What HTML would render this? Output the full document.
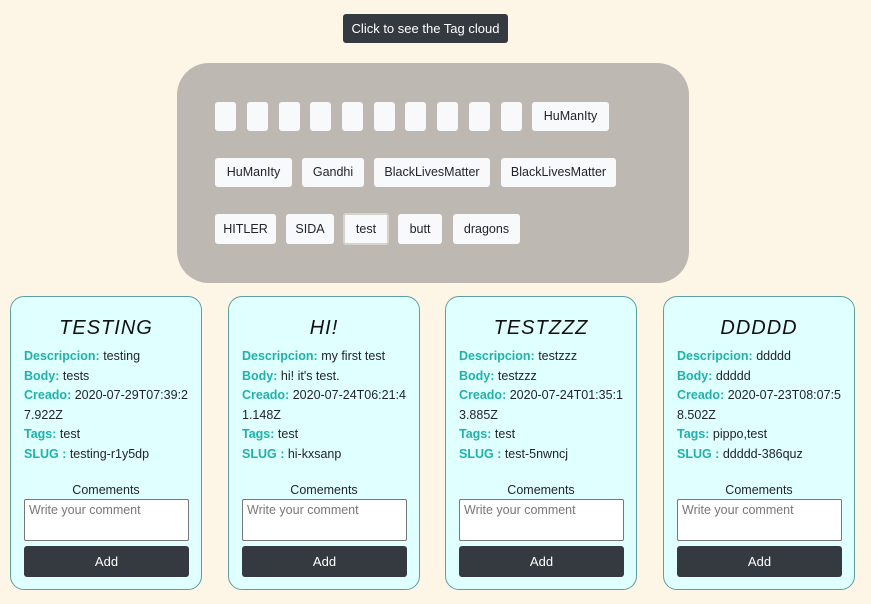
<!DOCTYPE html>
<html><head><style>
*{box-sizing:border-box;margin:0;padding:0}
body{width:871px;height:604px;background:#fdf5e6;font-family:"Liberation Sans",sans-serif;position:relative;overflow:hidden;color:#212529}
.top{position:absolute;left:343px;top:14px;width:165px;height:29px;background:#343a40;color:#fff;border-radius:3px;font-size:13px;text-align:center;line-height:29px}
.panel{position:absolute;left:177px;top:63px;width:512px;height:220px;background:#bdb8b2;border-radius:32px}
.t{position:absolute;background:#f8f9fa;border-radius:3px;font-size:12.5px;color:#212529;text-align:center;line-height:29px;height:29px}
.card{position:absolute;top:296px;width:192px;height:294px;background:#e0ffff;border:1px solid #5f9ea0;border-radius:14px}
.card h2{position:absolute;top:20px;left:0;right:0;text-align:center;font-style:italic;font-weight:normal;font-size:20px;letter-spacing:1px;color:#111}
.info{position:absolute;left:13px;top:50px;width:170px;font-size:12.5px;line-height:19.5px;word-break:break-all}
.info b{color:#20b2aa}
.cm{position:absolute;top:186px;left:0;right:0;text-align:center;font-size:12.5px}
.ta{position:absolute;left:13px;top:202px;width:165px;height:42px;background:#fff;border:1px solid #767676;border-radius:2px;font-size:12.5px;color:#777;padding:3px 4px}
.add{position:absolute;left:13px;top:249px;width:165px;height:31px;background:#343a40;color:#fff;border-radius:3px;text-align:center;line-height:31px;font-size:13px}
</style></head><body>
<div class="top">Click to see the Tag cloud</div>
<div class="panel"></div>
<div class="t" style="left:215px;top:102px;width:21px"></div>
<div class="t" style="left:247px;top:102px;width:21px"></div>
<div class="t" style="left:279px;top:102px;width:21px"></div>
<div class="t" style="left:310px;top:102px;width:21px"></div>
<div class="t" style="left:342px;top:102px;width:21px"></div>
<div class="t" style="left:374px;top:102px;width:21px"></div>
<div class="t" style="left:405px;top:102px;width:21px"></div>
<div class="t" style="left:437px;top:102px;width:21px"></div>
<div class="t" style="left:469px;top:102px;width:21px"></div>
<div class="t" style="left:501px;top:102px;width:21px"></div>
<div class="t" style="left:532px;top:102px;width:77px">HuManIty</div>
<div class="t" style="left:215px;top:158px;width:77px">HuManIty</div>
<div class="t" style="left:302px;top:158px;width:62px">Gandhi</div>
<div class="t" style="left:374px;top:158px;width:116px">BlackLivesMatter</div>
<div class="t" style="left:501px;top:158px;width:115px">BlackLivesMatter</div>
<div class="t" style="left:215px;top:214px;width:61px;height:30px;line-height:30px">HITLER</div>
<div class="t" style="left:286px;top:214px;width:48px;height:30px;line-height:30px">SIDA</div>
<div class="t" style="left:343px;top:213px;width:46px;height:32px;line-height:28px;border:2px solid #d6d3cf">test</div>
<div class="t" style="left:398px;top:214px;width:44px;height:30px;line-height:30px">butt</div>
<div class="t" style="left:453px;top:214px;width:67px;height:30px;line-height:30px">dragons</div>

<div class="card" style="left:10px"><h2>TESTING</h2><div class="info"><b>Descripcion:</b> testing<br><b>Body:</b> tests<br><b>Creado:</b> 2020-07-29T07:39:27.922Z<br><b>Tags:</b> test<br><b>SLUG :</b> testing-r1y5dp</div><div class="cm">Comements</div><div class="ta">Write your comment</div><div class="add">Add</div></div>
<div class="card" style="left:228px"><h2>HI!</h2><div class="info"><b>Descripcion:</b> my first test<br><b>Body:</b> hi! it's test.<br><b>Creado:</b> 2020-07-24T06:21:41.148Z<br><b>Tags:</b> test<br><b>SLUG :</b> hi-kxsanp</div><div class="cm">Comements</div><div class="ta">Write your comment</div><div class="add">Add</div></div>
<div class="card" style="left:445px"><h2>TESTZZZ</h2><div class="info"><b>Descripcion:</b> testzzz<br><b>Body:</b> testzzz<br><b>Creado:</b> 2020-07-24T01:35:13.885Z<br><b>Tags:</b> test<br><b>SLUG :</b> test-5nwncj</div><div class="cm">Comements</div><div class="ta">Write your comment</div><div class="add">Add</div></div>
<div class="card" style="left:663px"><h2>DDDDD</h2><div class="info"><b>Descripcion:</b> ddddd<br><b>Body:</b> ddddd<br><b>Creado:</b> 2020-07-23T08:07:58.502Z<br><b>Tags:</b> pippo,test<br><b>SLUG :</b> ddddd-386quz</div><div class="cm">Comements</div><div class="ta">Write your comment</div><div class="add">Add</div></div>
</body></html>
